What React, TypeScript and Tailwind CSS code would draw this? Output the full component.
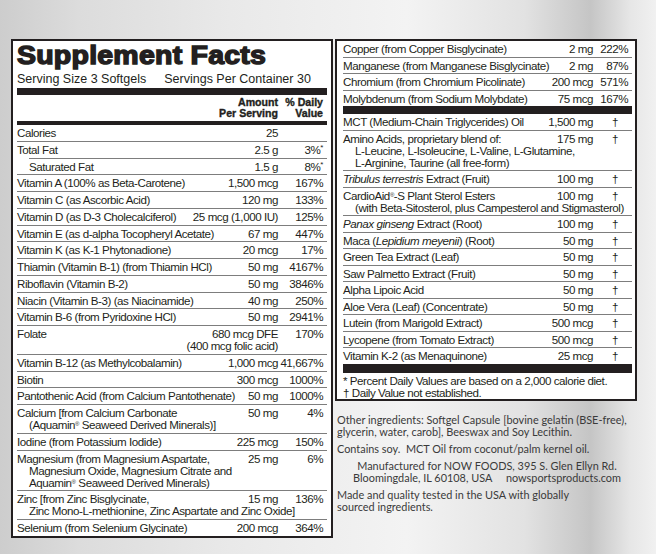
import React from 'react';

type RowProps = {
  name: React.ReactNode;
  amount?: React.ReactNode;
  dv?: React.ReactNode;
  more?: React.ReactNode[];
  line?: boolean;
  sub?: boolean;
  side: 'left' | 'right';
};

// one nutrient line, continuation lines hang under it
const Row = ({ name, amount, dv, more, line = true, sub = false, side }: RowProps) => (
  <div className={line ? 'border-b border-[#7d7d7d]' : ''}>
    <div
      className={`${side === 'left' ? 'pt-[2px] pb-[1.75px]' : 'pt-[2px] pb-[1.5px]'} ${
        sub ? 'ml-[12px] border-t border-[#7d7d7d]' : ''
      }`}
    >
      <div className="flex items-start">
        <div className="min-w-0 flex-1 whitespace-nowrap">{name}</div>
        <div className="shrink-0 whitespace-nowrap pl-[4px] text-right">{amount}</div>
        <div
          className={`flex shrink-0 justify-end whitespace-nowrap ${
            side === 'left' ? 'w-[49px] pr-[4px]' : 'w-[39px] pr-[4px]'
          }`}
        >
          {dv}
        </div>
      </div>
      {more?.map((m, i) => (
        <div key={i} className="whitespace-nowrap pl-[12px]">
          {m}
        </div>
      ))}
    </div>
  </div>
);

const Dagger = () => <span className="mr-[10px]">†</span>;
const Reg = () => <sup className="text-[6px]">®</sup>;
const Star = () => <sup className="text-[8px]">*</sup>;

export default function App() {
  return (
    <div className="flex min-h-[554px] w-[656px] items-start gap-[2px] bg-[linear-gradient(90deg,#cdcdcd_0%,#dcdcdc_12%,#e9e9e9_35%,#f3f3f3_62%,#e2e2e2_80%,#c5c5c5_90%,#e6e6e6_96%,#f1f1f1_100%)] pl-[11px] pt-[39px] font-['Liberation_Sans',Arial,sans-serif] text-[11.6px] leading-[12px] tracking-[-0.45px] text-[#231f20]">
      {/* left label */}
      <section className="w-[322px] border-2 border-[#231f20] bg-white px-[4px]">
        <h1 className="inline-block origin-left scale-x-[1.14] whitespace-nowrap text-[25px] font-bold leading-[28px] tracking-[0.2px] [-webkit-text-stroke:1.4px_#231f20]">
          Supplement Facts
        </h1>
        <div className="mt-[3px] flex gap-[18px] whitespace-nowrap text-[12.5px] leading-[14px] tracking-normal">
          <span>Serving Size 3 Softgels</span>
          <span>Servings Per Container 30</span>
        </div>
        <div className="mt-[2px] h-[7px] bg-[#231f20]" />
        <div className="flex justify-end pt-[2px] text-[10.6px] font-bold leading-[11px] tracking-normal [-webkit-text-stroke:0.35px_#231f20]">
          <div className="text-right">
            <div>Amount</div>
            <div>Per Serving</div>
          </div>
          <div className="w-[49px] pr-[4px] text-right">
            <div>% Daily</div>
            <div>Value</div>
          </div>
        </div>
        <div className="mt-[2px] h-[4px] bg-[#231f20]" />
        <Row side="left" name="Calories" amount="25" />
        <Row side="left" line={false} name="Total Fat" amount="2.5 g" dv={<span>3%<Star /></span>} />
        <Row side="left" sub name="Saturated Fat" amount="1.5 g" dv={<span>8%<Star /></span>} />
        <Row side="left" name="Vitamin A (100% as Beta-Carotene)" amount="1,500 mcg" dv="167%" />
        <Row side="left" name="Vitamin C (as Ascorbic Acid)" amount="120 mg" dv="133%" />
        <Row side="left" name="Vitamin D (as D-3 Cholecalciferol)" amount="25 mcg (1,000 IU)" dv="125%" />
        <Row side="left" name="Vitamin E (as d-alpha Tocopheryl Acetate)" amount="67 mg" dv="447%" />
        <Row side="left" name="Vitamin K (as K-1 Phytonadione)" amount="20 mcg" dv="17%" />
        <Row side="left" name="Thiamin (Vitamin B-1) (from Thiamin HCl)" amount="50 mg" dv="4167%" />
        <Row side="left" name="Riboflavin (Vitamin B-2)" amount="50 mg" dv="3846%" />
        <Row side="left" name="Niacin (Vitamin B-3) (as Niacinamide)" amount="40 mg" dv="250%" />
        <Row side="left" name="Vitamin B-6 (from Pyridoxine HCl)" amount="50 mg" dv="2941%" />
        <Row
          side="left"
          name="Folate"
          amount={
            <>
              <div>680 mcg DFE</div>
              <div>(400 mcg folic acid)</div>
            </>
          }
          dv="170%"
        />
        <Row side="left" name="Vitamin B-12 (as Methylcobalamin)" amount="1,000 mcg" dv="41,667%" />
        <Row side="left" name="Biotin" amount="300 mcg" dv="1000%" />
        <Row side="left" name="Pantothenic Acid (from Calcium Pantothenate)" amount="50 mg" dv="1000%" />
        <Row
          side="left"
          name="Calcium [from Calcium Carbonate"
          more={[<>(Aquamin<Reg /> Seaweed Derived Minerals)]</>]}
          amount="50 mg"
          dv="4%"
        />
        <Row side="left" name="Iodine (from Potassium Iodide)" amount="225 mcg" dv="150%" />
        <Row
          side="left"
          name="Magnesium (from Magnesium Aspartate,"
          more={['Magnesium Oxide, Magnesium Citrate and', <>Aquamin<Reg /> Seaweed Derived Minerals)</>]}
          amount="25 mg"
          dv="6%"
        />
        <Row
          side="left"
          name="Zinc [from Zinc Bisglycinate,"
          more={['Zinc Mono-L-methionine, Zinc Aspartate and Zinc Oxide]']}
          amount="15 mg"
          dv="136%"
        />
        <Row side="left" line={false} name="Selenium (from Selenium Glycinate)" amount="200 mcg" dv="364%" />
      </section>

      {/* right column */}
      <div className="w-[302px]">
        <section className="border-2 border-[#231f20] bg-white pl-[6px] pr-[3px]">
          <Row side="right" name="Copper (from Copper Bisglycinate)" amount="2 mg" dv="222%" />
          <Row side="right" name="Manganese (from Manganese Bisglycinate)" amount="2 mg" dv="87%" />
          <Row side="right" name="Chromium (from Chromium Picolinate)" amount="200 mcg" dv="571%" />
          <Row side="right" line={false} name="Molybdenum (from Sodium Molybdate)" amount="75 mcg" dv="167%" />
          <div className="h-[8px] bg-[#231f20]" />
          <Row side="right" name="MCT (Medium-Chain Triglycerides) Oil" amount="1,500 mg" dv={<Dagger />} />
          <Row
            side="right"
            name="Amino Acids, proprietary blend of:"
            more={['L-Leucine, L-Isoleucine, L-Valine, L-Glutamine,', 'L-Arginine, Taurine (all free-form)']}
            amount="175 mg"
            dv={<Dagger />}
          />
          <Row
            side="right"
            name={
              <>
                <i>Tribulus terrestris</i> Extract (Fruit)
              </>
            }
            amount="100 mg"
            dv={<Dagger />}
          />
          <Row
            side="right"
            name={
              <>
                CardioAid<Reg />-S Plant Sterol Esters
              </>
            }
            more={['(with Beta-Sitosterol, plus Campesterol and Stigmasterol)']}
            amount="100 mg"
            dv={<Dagger />}
          />
          <Row
            side="right"
            name={
              <>
                <i>Panax ginseng</i> Extract (Root)
              </>
            }
            amount="100 mg"
            dv={<Dagger />}
          />
          <Row
            side="right"
            name={
              <>
                Maca (<i>Lepidium meyenii</i>) (Root)
              </>
            }
            amount="50 mg"
            dv={<Dagger />}
          />
          <Row side="right" name="Green Tea Extract (Leaf)" amount="50 mg" dv={<Dagger />} />
          <Row side="right" name="Saw Palmetto Extract (Fruit)" amount="50 mg" dv={<Dagger />} />
          <Row side="right" name="Alpha Lipoic Acid" amount="50 mg" dv={<Dagger />} />
          <Row side="right" name="Aloe Vera (Leaf) (Concentrate)" amount="50 mg" dv={<Dagger />} />
          <Row side="right" name="Lutein (from Marigold Extract)" amount="500 mcg" dv={<Dagger />} />
          <Row side="right" name="Lycopene (from Tomato Extract)" amount="500 mcg" dv={<Dagger />} />
          <Row side="right" line={false} name="Vitamin K-2 (as Menaquinone)" amount="25 mcg" dv={<Dagger />} />
          <div className="h-[9px] bg-[#231f20]" />
          <div className="pt-[2px] leading-[12px]">
            <div>* Percent Daily Values are based on a 2,000 calorie diet.</div>
            <div>† Daily Value not established.</div>
          </div>
        </section>

        <div className="mt-[13px] flex flex-col gap-[5px] whitespace-nowrap pl-[2px] font-['Lato','Open_Sans',sans-serif] text-[10.9px] leading-[12px] tracking-normal text-[#3a3a3a]">
          <p>
            Other ingredients: Softgel Capsule [bovine gelatin (BSE-free),
            <br />
            glycerin, water, carob], Beeswax and Soy Lecithin.
          </p>
          <p>Contains soy.&nbsp; MCT Oil from coconut/palm kernel oil.</p>
          <p className="text-center">
            Manufactured for NOW FOODS, 395 S. Glen Ellyn Rd.
            <br />
            Bloomingdale, IL 60108, USA&nbsp;&nbsp;&nbsp;&nbsp; nowsportsproducts.com
          </p>
          <p>
            Made and quality tested in the USA with globally
            <br />
            sourced ingredients.
          </p>
        </div>
      </div>
    </div>
  );
}
